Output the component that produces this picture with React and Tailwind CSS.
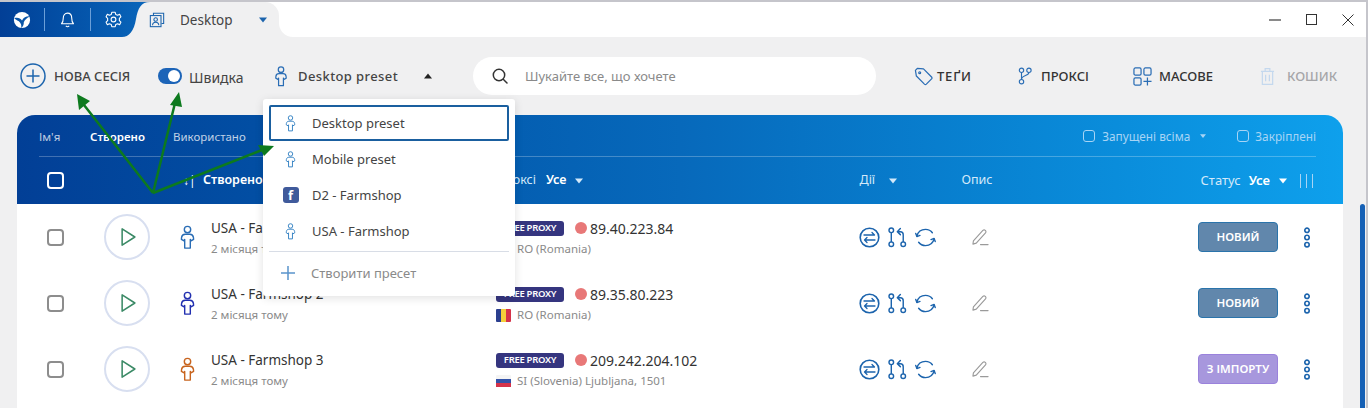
import React from 'react';

const FONT = 'font-["Noto_Sans",sans-serif]';

const rows = [
  { name: 'USA - Farmshop', color: '#2a6db5', ip: '89.40.223.84', flag: 'ro', geo: 'RO (Romania)', status: 'НОВИЙ' },
  { name: 'USA - Farmshop 2', color: '#2230b0', ip: '89.35.80.223', flag: 'ro', geo: 'RO (Romania)', status: 'НОВИЙ' },
  { name: 'USA - Farmshop 3', color: '#c8641e', ip: '209.242.204.102', flag: 'si', geo: 'SI (Slovenia) Ljubljana, 1501', status: 'З ІМПОРТУ' }
];

const presets = [
  { name: 'Desktop preset', icon: 'person', active: true },
  { name: 'Mobile preset', icon: 'person' },
  { name: 'D2 - Farmshop', icon: 'fb' },
  { name: 'USA - Farmshop', icon: 'person' }
];

const Person = ({ color = '#2a6db5', className = 'w-[15px] h-[25px]' }) => (
  <svg viewBox="0 0 16 26" className={className} fill="none" stroke={color} strokeWidth="1.5" strokeLinejoin="round">
    <circle cx="8" cy="4.5" r="3.4" />
    <path d="M5.5 9.5h5c2 0 3.6 1.5 3.8 3.4l.2 2.1-2.8 1.6-.7-1.6V24.3H5V15l-.7 1.6L1.5 15l.2-2.1C1.9 11 3.5 9.5 5.5 9.5z" />
  </svg>
);

const Caret = ({ up, className = '' }) => (
  <svg viewBox="0 0 8 6" className={`w-[8px] h-[6px] ${className}`} fill="currentColor">
    <path d={up ? 'M4 0.5 8 5.5H0z' : 'M0 0.5h8L4 5.5z'} />
  </svg>
);

const ActionIcons = () => (
  <div className="flex items-center gap-[7px] w-[113px]">
    <svg viewBox="0 0 21 21" className="w-[21px] h-[21px]" fill="none" stroke="#1c64ad" strokeWidth="1.6" strokeLinecap="round" strokeLinejoin="round">
      <circle cx="10.5" cy="10.5" r="9.3" />
      <path d="M5 8h10.5M13 5.5 15.5 8M16 13H5.5M8 10.5 5.5 13 8 15.5" strokeWidth="1.3" />
    </svg>
    <svg viewBox="0 0 22 22" className="w-[21px] h-[21px]" fill="none" stroke="#1c64ad" strokeWidth="1.5" strokeLinecap="round" strokeLinejoin="round">
      <circle cx="4.5" cy="3.5" r="2.4" />
      <circle cx="4.5" cy="18" r="2.4" />
      <circle cx="17" cy="18" r="2.4" />
      <path d="M4.5 6v9.5M17 15.5V8c0-2-1-3-3-3h-2M14 1.5 10.8 5 14 8" />
    </svg>
    <svg viewBox="0 0 22 22" className="w-[21px] h-[21px]" fill="none" stroke="#1c64ad" strokeWidth="1.5" strokeLinecap="round" strokeLinejoin="round">
      <path d="M2 9.5C3 5.5 6.5 2.5 11 2.5c3 0 5.6 1.300 7.200 3.500M20 12.500C19 16.500 15.500 19.500 11 19.500c-3 0-5.600-1.300-7.200-3.500" />
      <path d="M.8 6.800 2 10l3.200-1.200M21.200 15.200 20 12l-3.200 1.200" />
    </svg>
  </div>
);

const Pencil = () => (
  <svg viewBox="0 0 18 18" className="w-[17px] h-[17px]" fill="none" stroke="#9a9a9a" strokeWidth="1.2" strokeLinejoin="round" strokeLinecap="round">
    <path d="M1.500 12.500 11.500 1.500c.8-.8 1.800-.8 2.600-.1.8.7.9 1.800.2 2.600L4.500 15 1 16z" />
    <path d="M9 16.500h8" />
  </svg>
);

const Dots = () => (
  <svg viewBox="0 0 8 22" className="w-[8px] h-[21px]" fill="none" stroke="#1c64ad" strokeWidth="1.7">
    <circle cx="4" cy="3.500" r="2.300" />
    <circle cx="4" cy="11" r="2.300" />
    <circle cx="4" cy="18.500" r="2.300" />
  </svg>
);

const Flag = ({ code }) =>
  code === 'ro' ? (
    <span className="flex w-[15px] h-[13px] overflow-hidden rounded-[1px]">
      <span className="flex-1 bg-[#2b3f8f]" />
      <span className="flex-1 bg-[#f4cf3a]" />
      <span className="flex-1 bg-[#d5334a]" />
    </span>
  ) : (
    <span className="flex flex-col w-[15px] h-[13px] overflow-hidden rounded-[1px]">
      <span className="flex-1 bg-[#f4f4f4]" />
      <span className="flex-1 bg-[#3352a8]" />
      <span className="flex-1 bg-[#d5334a]" />
    </span>
  );

const SessionRow = ({ row }) => (
  <div className="flex items-center h-[66px] pl-[30px]">
    <span className="w-[17px] h-[17px] rounded-[4px] border-2 border-[#8d8d8d] shrink-0" />
    <div className="w-[46px] h-[46px] ml-[40px] rounded-full border-2 border-[#d8dff0] flex items-center justify-center shrink-0">
      <svg viewBox="0 0 18 22" className="w-[17px] h-[20px] ml-[3px]" fill="none" stroke="#3b8a66" strokeWidth="1.700" strokeLinejoin="round">
        <path d="M2 2v18l14-9z" />
      </svg>
    </div>
    <div className="w-[61px] pl-[30px] shrink-0 flex">
      <Person color={row.color} />
    </div>
    <div className="w-[285px] shrink-0 pt-[2px]">
      <p className="text-[13.500px] leading-[18px] text-[#333]">{row.name}</p>
      <p className="text-[11.500px] leading-[16px] mt-[4px] text-[#8a8a8a]">2 місяця тому</p>
    </div>
    <div className="w-[363px] shrink-0 pt-[2px]">
      <div className="flex items-center h-[18px]">
        <span className="w-[68px] h-[15px] rounded-[3px] bg-[#35357f] text-white text-[9.500px] font-semibold flex items-center justify-center tracking-[-0.3px]">FREE PROXY</span>
        <span className="w-[12px] h-[12px] rounded-full bg-[#e87878] ml-[11px]" />
        <span className="ml-[3px] text-[14px] text-[#333]">{row.ip}</span>
      </div>
      <div className="flex items-center h-[16px] mt-[4px] gap-[6px] text-[11.500px] text-[#8a8a8a]">
        <Flag code={row.flag} />
        {row.geo}
      </div>
    </div>
    <ActionIcons />
    <div className="w-[226px] shrink-0">
      <Pencil />
    </div>
    <span className={`w-[80px] h-[30px] rounded-[4px] border flex items-center justify-center text-white text-[11.500px] font-semibold shrink-0 ${row.status === 'НОВИЙ' ? 'bg-[#6187ac] border-[#2a74ab]' : 'bg-[#a797dd] border-[#9a82dc]'}`}>
      {row.status}
    </span>
    <div className="ml-[25px] flex">
      <Dots />
    </div>
  </div>
);

const PresetMenu = () => (
  <div className="absolute left-[263px] top-[99px] w-[252px] h-[197px] bg-white rounded-[3px] shadow-[0_2px_10px_rgba(0,0,0,0.12)] p-[6px] text-[13px] z-10">
    {presets.map((preset) => (
      <div
        key={preset.name}
        className={`h-[36px] flex items-center text-[#444] ${preset.active ? 'border-2 border-[#1a5f9f] rounded-[2px]' : ''}`}
      >
        <span className={`w-[43px] flex justify-center ${preset.active ? 'ml-[-2px]' : ''}`}>
          {preset.icon === 'fb' ? (
            <span className="w-[16px] h-[16px] rounded-[3px] bg-[#3f5a9b] text-white text-[13px] font-bold leading-[16px] flex items-end justify-center">f</span>
          ) : (
            <Person color="#3a86c5" className="w-[11px] h-[17px]" />
          )}
        </span>
        <span className="pt-[2px]">{preset.name}</span>
      </div>
    ))}
    <div className="border-t border-[#d8dde6] mt-[2px] h-[42px] flex items-center text-[#8a8a8a] mx-0">
      <span className="w-[37px] flex justify-center">
        <svg viewBox="0 0 14 14" className="w-[14px] h-[14px]" stroke="#5a94cc" strokeWidth="1.500">
          <path d="M7 0v14M0 7h14" />
        </svg>
      </span>
      <span className="ml-[5px] pt-[2px]">Створити пресет</span>
    </div>
  </div>
);

const Arrows = () => (
  <svg className="absolute left-0 top-0 w-[400px] h-[220px] z-20 pointer-events-none" viewBox="0 0 400 220" fill="none">
    <path d="M153 193 84 105M153 193 175 103M153 193 262 150" stroke="#0d7a1e" strokeWidth="2.500" />
    <path d="M77 94 90 101 79 110zM179 92 182 107 170 105zM274 146 264 156 258 145z" fill="#0d7a1e" />
  </svg>
);

const App = () => (
  <div className={`relative w-[1368px] h-[408px] overflow-hidden bg-[#f0f0f1] border-r-2 border-[#c5c5cb] ${FONT}`}>
    <div className="h-[2px] bg-[#c5c5cb]" />
    {/* title bar */}
    <div className="relative flex h-[35px] bg-white">
      <div className="w-[150px] flex items-center bg-gradient-to-r from-[#023f96] to-[#0a66bb] relative">
        <span className="w-[44px] flex justify-center">
          <svg viewBox="0 0 20 20" className="w-[18px] h-[18px]">
            <circle cx="10" cy="10" r="9" fill="#fff" />
            <path d="M1.500 8c4-1 6.500 0 8.500 2.500C12 7 15 5.500 19 6c-3.500 1.500-6 3.500-7 6.500.2 2.500-1 5-3 6.500.8-3-.2-5.500-2.500-7.500C5 10.500 3 9.500 1.500 8z" fill="#0a55a8" />
          </svg>
        </span>
        <span className="w-px h-[23px] bg-[#6b9fd8]" />
        <span className="w-[45px] flex justify-center">
          <svg viewBox="0 0 20 20" className="w-[17px] h-[17px]" fill="none" stroke="#fff" strokeWidth="1.300" strokeLinejoin="round">
            <path d="M3 15c1.500-1.500 2-3 2-6.500C5 5 7 2.500 10 2.500S15 5 15 8.500c0 3.500.5 5 2 6.500zM8 17.500c1 1 3 1 4 0" />
          </svg>
        </span>
        <span className="w-px h-[23px] bg-[#6b9fd8]" />
        <span className="w-[45px] flex justify-center">
          <svg viewBox="0 0 20 20" className="w-[17px] h-[17px]" fill="none" stroke="#fff" strokeWidth="1.300" strokeLinejoin="round">
            <path d="M8 1.500h4l.6 2.500 2.300 1 2.300-1.100 1.500 3-1.800 1.700v2.800l1.800 1.700-1.500 3-2.300-1.100-2.300 1-.6 2.500H8l-.6-2.500-2.300-1-2.300 1.100-1.500-3 1.800-1.700V8.600L1.300 6.900l1.500-3 2.300 1.100 2.300-1z" />
            <circle cx="10" cy="10" r="2.800" />
          </svg>
        </span>
        {/* s-curve where the blue strip meets the tab */}
        <svg viewBox="0 0 28 35" className="absolute right-0 top-0 w-[28px] h-[35px]">
          <path d="M28 0C19 0 16 6 14 17 12 29 7 35 0 35H28z" fill="#f0f0f1" />
        </svg>
      </div>
      <div className="w-[129px] bg-[#f0f0f1] rounded-tr-[14px] flex items-center text-[13.500px] text-[#444] relative">
        <svg viewBox="0 0 18 18" className="w-[16px] h-[16px] -ml-[1px]" fill="none" stroke="#1c64ad" strokeWidth="1.200">
          <path d="M5 4V1.500h11.500V13H14" />
          <rect x="1.500" y="4" width="12" height="12.500" />
          <circle cx="7.500" cy="8.500" r="2" />
          <path d="M4 15c0-2.500 1.500-3.500 3.500-3.500S11 12.500 11 15" />
        </svg>
        <span className="ml-[15px] pt-[1px]">Desktop</span>
        <Caret className="ml-[26px] text-[#1c64ad]" />
      </div>
      <div className="w-[14px] bg-[#f0f0f1]">
        <div className="h-full bg-white rounded-bl-[14px]" />
      </div>
      <div className="flex-1 flex items-center justify-end pr-[12px] gap-[25px] bg-white">
        <span className="w-[12px] h-[2px] bg-[#8a8a8a]" />
        <span className="w-[11px] h-[11px] border-[1.500px] border-[#333]" />
        <svg viewBox="0 0 12 12" className="w-[12px] h-[12px]" stroke="#333" strokeWidth="1">
          <path d="M.5.5l11 11M11.500.5l-11 11" />
        </svg>
      </div>
    </div>

    {/* toolbar */}
    <div className="flex items-center h-[38px] mt-[20px] pl-[20px] text-[#444]">
      <svg viewBox="0 0 26 26" className="w-[26px] h-[26px]" fill="none" stroke="#1c64ad" strokeWidth="1.500">
        <circle cx="13" cy="13" r="12" />
        <path d="M13 6.500v13M6.500 13h13" />
      </svg>
      <span className="ml-[8px] w-[85px] text-[13px] font-medium whitespace-nowrap pt-[2px]">НОВА СЕСІЯ</span>
      <span className="ml-[19px] w-[24px] h-[16px] rounded-full bg-[#1c64b8] flex items-center justify-end pr-[2px]">
        <span className="w-[12px] h-[12px] rounded-full bg-white" />
      </span>
      <span className="ml-[7px] w-[85px] text-[14px] pt-[2px]">Швидка</span>
      <Person color="#2a6db5" className="w-[14px] h-[21px]" />
      <span className="ml-[10px] w-[126px] text-[13px] tracking-[0.4px] font-medium pt-[2px]">Desktop preset</span>
      <Caret up className="text-[#222]" />
      <div className="ml-[41px] w-[403px] h-[38px] rounded-full bg-white flex items-center pl-[19px] text-[13px] text-[#8a8a8a]">
        <svg viewBox="0 0 16 16" className="w-[16px] h-[16px] mr-[17px]" fill="none" stroke="#333" strokeWidth="1.500" strokeLinecap="round">
          <circle cx="7" cy="7" r="5.700" />
          <path d="M11.500 11.500 15 15" />
        </svg>
        <span className="pt-[2px]">Шукайте все, що хочете</span>
      </div>
      <div className="ml-[38px] flex items-center gap-[4px] w-[104px] text-[13px] font-medium text-[#333]">
        <svg viewBox="0 0 20 20" className="w-[19px] h-[19px]" fill="none" stroke="#2a6db5" strokeWidth="1.300" strokeLinejoin="round">
          <path d="M1.500 3.500 3.500 1.500l6.500.5 8.500 8.500a1.500 1.500 0 0 1 0 2L13 18a1.500 1.500 0 0 1-2 0L2.500 9.500z" />
          <circle cx="6" cy="6" r="1" />
        </svg>
        <span className="pt-[2px] tracking-[0.8px]">ТЕҐИ</span>
      </div>
      <div className="flex items-center gap-[9px] w-[115px] text-[13px] font-medium text-[#333]">
        <svg viewBox="0 0 16 20" className="w-[14px] h-[18px]" fill="none" stroke="#2a6db5" strokeWidth="1.300">
          <circle cx="4" cy="3.500" r="2.500" />
          <circle cx="12.500" cy="3.500" r="2.500" />
          <circle cx="4" cy="16.500" r="2.500" />
          <path d="M4 6v8M12.500 6c0 4-8.500 3-8.500 8" />
        </svg>
        <span className="pt-[2px]">ПРОКСІ</span>
      </div>
      <div className="flex items-center gap-[7px] w-[127px] text-[13px] font-medium text-[#333]">
        <svg viewBox="0 0 20 20" className="w-[19px] h-[19px]" fill="none" stroke="#2a6db5" strokeWidth="1.300">
          <rect x="1" y="1" width="7.500" height="7.500" rx="1.500" />
          <rect x="11.500" y="1" width="7.500" height="7.500" rx="1.500" />
          <rect x="1" y="11.500" width="7.500" height="7.500" rx="1.500" />
          <path d="M15.200 11v8.500M11 15.200h8.500" />
        </svg>
        <span className="pt-[2px]">МАСОВЕ</span>
      </div>
      <div className="flex items-center gap-[12px] text-[13px] font-medium text-[#a5a5a8]">
        <svg viewBox="0 0 16 20" className="w-[15px] h-[19px]" fill="none" stroke="#c4d8ee" strokeWidth="1.300">
          <path d="M1 4.500h14M5.500 4.500V1.500h5v3M2.500 4.500v14h11v-14M6 8v7M10 8v7" />
        </svg>
        <span className="pt-[2px]">КОШИК</span>
      </div>
    </div>

    {/* sessions table */}
    <div className="ml-[17px] mr-[23px] mt-[20px] rounded-t-[18px] overflow-hidden bg-white h-[293px]">
      <div className="h-[89px] bg-gradient-to-r from-[#023f96] via-[#0769bb] to-[#0ea0ec] text-white">
        <div className="ml-[22px] mr-[27px] h-[42px] flex items-center border-b border-white/25 text-[11.500px] text-white/75">
          <span className="w-[51px] pt-[2px]">Ім'я</span>
          <span className="w-[83px] font-semibold text-white pt-[2px]">Створено</span>
          <span className="pt-[2px]">Використано</span>
          <span className="ml-auto flex items-center text-[#a7d4f5] text-[11.800px]">
            <span className="w-[12px] h-[12px] rounded-[3px] border border-[#a7d4f5] mr-[7px]" />
            <span className="pt-[2px]">Запущені всіма</span>
            <Caret className="ml-[9px] scale-75" />
            <span className="w-[12px] h-[12px] rounded-[3px] border border-[#a7d4f5] ml-[30px] mr-[6px]" />
            <span className="pt-[2px]">Закріплені</span>
          </span>
        </div>
        <div className="h-[47px] flex items-center pl-[30px] text-[12.500px] text-[#d3e9fa]">
          <span className="w-[17px] h-[17px] rounded-[4px] border-2 border-white" />
          <span className="ml-[119px] w-[20px] text-white text-[12px]">↓|</span>
          <span className="font-semibold text-white w-[293px]">Створено</span>
          <span className="w-[14px]">Проксі</span>
          <span className="ml-[36px] font-semibold text-white">Усе</span>
          <Caret className="ml-[8px]" />
          <span className="ml-[277px] w-[29px]">Дії</span>
          <Caret className="w-[7px]" />
          <span className="ml-[65px]">Опис</span>
          <span className="ml-auto text-[13px]">Статус</span>
          <span className="ml-[8px] text-[13px] font-semibold text-white">Усе</span>
          <Caret className="ml-[9px] text-white" />
          <span className="ml-[13px] mr-[30px] w-[13px] h-[14px] border-x border-[#a7d4f5] flex justify-center">
            <span className="w-px h-full bg-[#a7d4f5]" />
          </span>
        </div>
      </div>
      {rows.map((row) => (
        <SessionRow key={row.name} row={row} />
      ))}
    </div>

    {/* scrollbar */}
    <div className="absolute right-[1px] top-[204px] bottom-0 w-[5px] rounded-t-full bg-[#1560b5]" />

    <PresetMenu />
    <Arrows />
  </div>
);

export default App;
